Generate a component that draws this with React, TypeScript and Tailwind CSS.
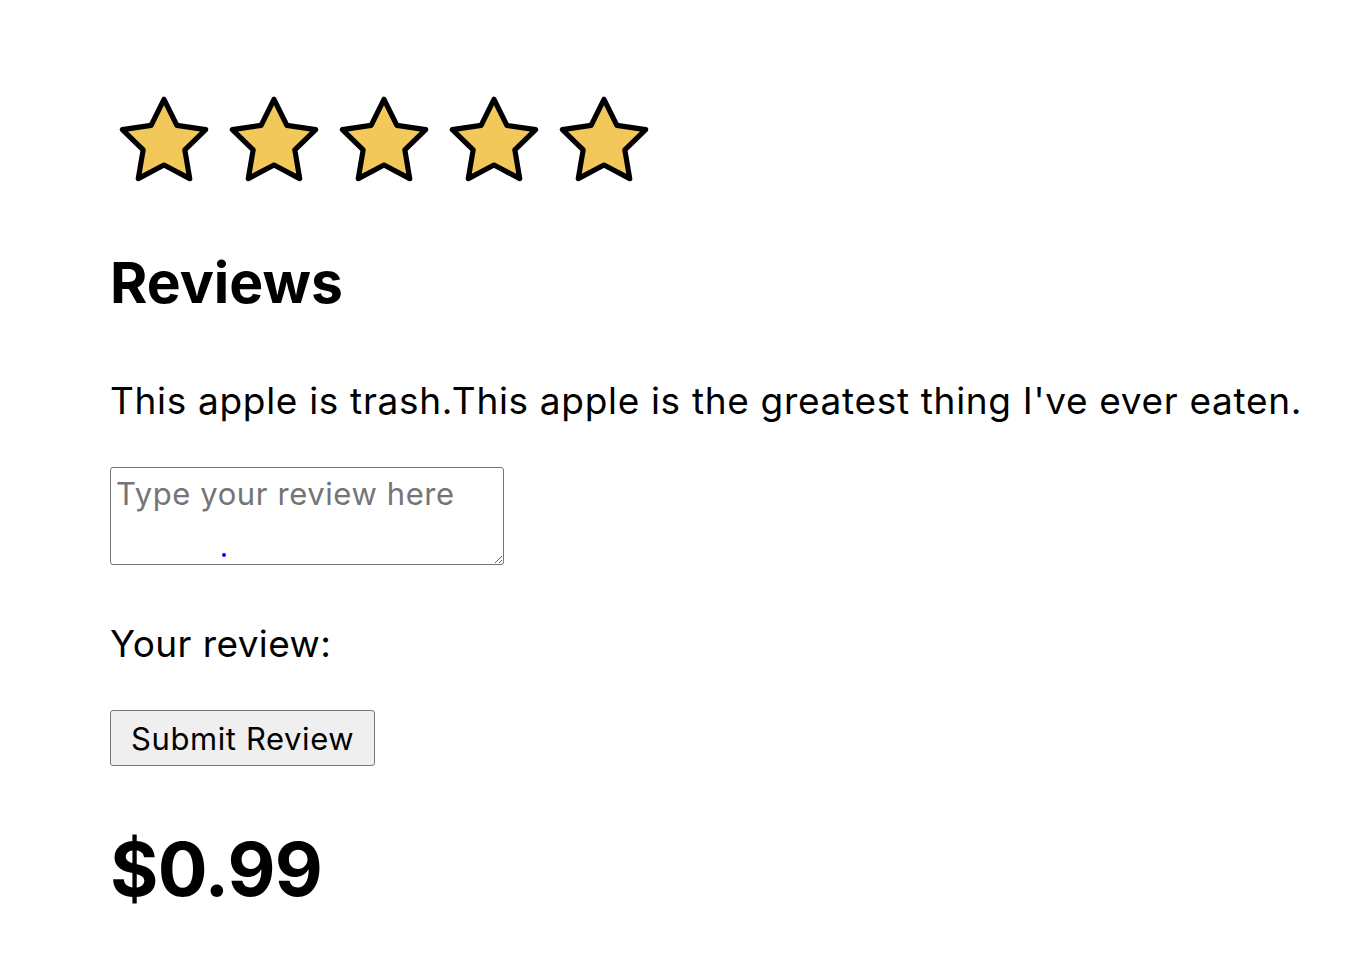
import React from "react";

function Star() {
  return (
    <svg width="100" height="100" viewBox="0 0 24 24" className="block shrink-0">
      <polygon
        points="12,2 15.09,8.26 22,9.27 17,14.14 18.18,21.02 12,17.77 5.82,21.02 7,14.14 2,9.27 8.91,8.26"
        fill="#f2c85b"
        stroke="#000"
        strokeWidth="1.25"
        strokeLinejoin="round"
      />
    </svg>
  );
}

export default function App() {
  return (
    <div className="min-h-screen bg-white text-black font-['Inter','Liberation_Sans',sans-serif]">
      <div className="flex flex-col items-start pl-[110px] pt-[91px]">
        <div className="flex gap-[10px] ml-[4px]">
          <Star />
          <Star />
          <Star />
          <Star />
          <Star />
        </div>
        <h2 className="mt-[63px] text-[57px] font-bold leading-none">Reviews</h2>
        <p className="mt-[71px] text-[37px] leading-none tracking-[0.68px]">
          This apple is trash.This apple is the greatest thing I've ever eaten.
        </p>
        <div className="relative mt-[48px]">
          <textarea
            placeholder="Type your review here"
            className="block w-[394px] h-[98px] border border-[#767676] rounded-[3px] px-[5px] py-[2px] text-[31px] leading-[48px] tracking-[0.6px] placeholder:text-[#757575] outline-none"
          />
          <span className="absolute left-[112px] top-[86px] w-[4px] h-[4px] rounded-full bg-[#0000ff]" />
        </div>
        <p className="mt-[60px] text-[37px] leading-none tracking-[0.4px]">Your review:</p>
        <button className="mt-[48px] h-[56px] px-[20px] bg-[#efefef] border border-[#767676] rounded-[3px] text-[31px] leading-none tracking-[0.6px]">
          Submit Review
        </button>
        <h1 className="mt-[66px] text-[74px] font-bold leading-none tracking-[-0.8px]">$0.99</h1>
      </div>
    </div>
  );
}
